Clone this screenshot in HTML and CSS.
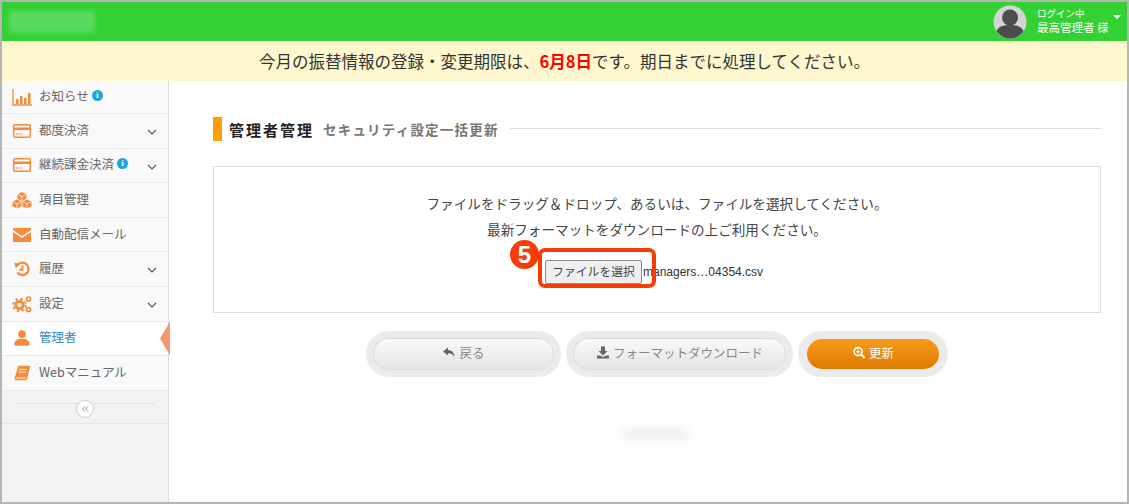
FILE: index.html
```html
<!DOCTYPE html>
<html lang="ja">
<head>
  <meta charset="UTF-8">
  <title>管理者管理</title>
  <link rel="stylesheet" href="styles.css">
</head>
<body>
  <div class="frame">
    <header class="topbar">
      <div class="logo"></div>
      <div class="user">
        <svg class="avatar" viewBox="0 0 34 34">
          <circle cx="17" cy="17" r="16.5" fill="#d4d4d4"/>
          <circle cx="17" cy="12.5" r="8" fill="#4d4d4d"/>
          <path d="M3.5 26c2-4.500 7-6 13.500-6s11.500 1.500 13.500 6c-3 4.500-8 7.500-13.500 7.500S6.500 30.500 3.500 26z" fill="#4d4d4d"/>
        </svg>
        <div class="user-text">
          <div class="user-label">ログイン中</div>
          <div class="user-name">最高管理者 様</div>
        </div>
        <span class="caret"></span>
      </div>
    </header>
    <div class="notice">今月の振替情報の登録・変更期限は、<b>6月8日</b>です。期日までに処理してください。</div>
    <div class="body-row">
      <nav class="sidebar">
        <a class="nav-item first">
          <svg class="nav-icon" viewBox="0 0 20 20"><path d="M1 2v16h19" fill="none" stroke="#f58b3c" stroke-width="1.300"/><path d="M4 12h2.500v5H4zM8 9h2.500v8H8zM12 11h2.500v6H12zM16 6h2.500v11H16z" fill="#f58b3c"/></svg>
          <span>お知らせ</span><i class="info">i</i>
        </a>
        <a class="nav-item">
          <svg class="nav-icon" viewBox="0 0 20 20"><rect x="1.700" y="3.700" width="16.600" height="12.600" rx="1.500" fill="none" stroke="#f58b3c" stroke-width="1.500"/><path d="M2 6.500h16v2.500H2z" fill="#f58b3c"/><path d="M4 13h3M8 13h2" stroke="#f58b3c"/></svg>
          <span>都度決済</span>
          <svg class="chev" viewBox="0 0 10 6"><path d="M1 1l4 4 4-4" fill="none" stroke="#555" stroke-width="1.100"/></svg>
        </a>
        <a class="nav-item">
          <svg class="nav-icon" viewBox="0 0 20 20"><rect x="1.700" y="3.700" width="16.600" height="12.600" rx="1.500" fill="none" stroke="#f58b3c" stroke-width="1.500"/><path d="M2 6.500h16v2.500H2z" fill="#f58b3c"/><path d="M4 13h3M8 13h2" stroke="#f58b3c"/></svg>
          <span>継続課金決済</span><i class="info">i</i>
          <svg class="chev" viewBox="0 0 10 6"><path d="M1 1l4 4 4-4" fill="none" stroke="#555" stroke-width="1.100"/></svg>
        </a>
        <a class="nav-item">
          <svg class="nav-icon" viewBox="0 0 20 20"><path d="M10 2l4.500 2.200v4.600L10 11 5.500 8.800V4.200zM5 9.500l4.500 2.200v4.600L5 18.500.5 16.300v-4.600zM15 9.500l4.500 2.200v4.600L15 18.500l-4.500-2.200v-4.600z" fill="#f58b3c"/><path d="M5.500 4.200L10 6.500l4.500-2.300M10 6.500V11M.5 11.700L5 14l4.500-2.300M5 14v4.500M10.500 11.700L15 14l4.500-2.300M15 14v4.500" fill="none" stroke="#fff" stroke-width=".7"/></svg>
          <span>項目管理</span>
        </a>
        <a class="nav-item">
          <svg class="nav-icon" viewBox="0 0 20 20"><path d="M2 3h16c.6 0 1 .4 1 1v1l-9 6-9-6V4c0-.6.400-1 1-1z" fill="#f58b3c"/><path d="M1 7l9 6 9-6v9c0 .6-.4 1-1 1H2c-.6 0-1-.4-1-1z" fill="#f58b3c"/></svg>
          <span>自動配信メール</span>
        </a>
        <a class="nav-item">
          <svg class="nav-icon" viewBox="-3 -3 26 26"><path d="M3.500 6A8 8 0 1 1 4 14.500" fill="none" stroke="#f58b3c" stroke-width="3"/><path d="M0 2l7 1-5 6z" fill="#f58b3c"/><path d="M10.500 5.500V11H6.500" fill="none" stroke="#f58b3c" stroke-width="2.800"/></svg>
          <span>履歴</span>
          <svg class="chev" viewBox="0 0 10 6"><path d="M1 1l4 4 4-4" fill="none" stroke="#555" stroke-width="1.100"/></svg>
        </a>
        <a class="nav-item">
          <svg class="nav-icon" viewBox="0 0 20 20"><circle cx="7.500" cy="11" r="3.800" fill="none" stroke="#f58b3c" stroke-width="3"/><circle cx="7.500" cy="11" r="6.300" fill="none" stroke="#f58b3c" stroke-width="1.800" stroke-dasharray="2.400 2.550"/><circle cx="16.500" cy="5" r="2" fill="none" stroke="#f58b3c" stroke-width="1.700"/><circle cx="16.500" cy="15.500" r="2" fill="none" stroke="#f58b3c" stroke-width="1.700"/></svg>
          <span>設定</span>
          <svg class="chev" viewBox="0 0 10 6"><path d="M1 1l4 4 4-4" fill="none" stroke="#555" stroke-width="1.100"/></svg>
        </a>
        <a class="nav-item active">
          <svg class="nav-icon" viewBox="-3 -3 26 26"><circle cx="10" cy="5" r="5" fill="#f58b3c"/><path d="M1.500 20c-1 0-1.500-.5-1.500-1.500C0 13.500 4 11 10 11s10 2.500 10 7.500c0 1-.5 1.500-1.500 1.500z" fill="#f58b3c"/></svg>
          <span>管理者</span>
          <span class="active-mark"></span>
        </a>
        <a class="nav-item">
          <svg class="nav-icon" viewBox="-1 -1 22 22"><path d="M6 2h12c1 0 1 1 .8 1.600L15.500 17c-.2.700-.7 1-1.500 1H3.500C2 18 1.500 16.500 2 15z" fill="#f58b3c"/><path d="M3.500 15.500h11M7 6h8M6.300 9h8" stroke="#fff" stroke-width="1"/></svg>
          <span>Webマニュアル</span>
        </a>
        <div class="collapse">
          <span class="collapse-btn">
            <svg viewBox="0 0 10 8"><path d="M4.500 1L1.500 4l3 3M8 1L5 4l3 3" fill="none" stroke="#999" stroke-width="1.100"/></svg>
          </span>
        </div>
      </nav>
      <main class="content">
        <h1 class="page-title">
          <span class="title-main">管理者管理</span>
          <span class="title-sub">セキュリティ設定一括更新</span>
        </h1>
        <section class="upload-box">
          <p>ファイルをドラッグ＆ドロップ、あるいは、ファイルを選択してください。</p>
          <p>最新フォーマットをダウンロードの上ご利用ください。</p>
          <div class="file-row">
            <span class="step">5</span>
            <span class="file-wrap">
              <button class="file-btn">ファイルを選択</button>
            </span>
            <span class="file-name">managers…04354.csv</span>
          </div>
        </section>
        <div class="actions">
          <div class="well back"><button class="btn">
            <svg class="btn-icon" viewBox="0 0 14 12"><path d="M6 1L1 5l5 4V6.700c3 0 5 .8 6.500 3.800 0-4-2.500-7-6.500-7z" fill="#666"/></svg>戻る</button></div>
          <div class="well format"><button class="btn">
            <svg class="btn-icon" viewBox="0 0 14 12"><path d="M5 0h4v4.500h2.500L7 9 2.500 4.500H5zM1 9h3l3 1.500L10 9h3v3H1z" fill="#666"/></svg>フォーマットダウンロード</button></div>
          <div class="well update"><button class="btn primary">
            <svg class="btn-icon" viewBox="0 0 14 14"><circle cx="6" cy="6" r="4.300" fill="none" stroke="#fff" stroke-width="1.800"/><path d="M9.500 9.500l3.500 3.500" stroke="#fff" stroke-width="2.200"/><path d="M4 6h4M6 4v4" stroke="#fff" stroke-width="1.200"/></svg>更新</button></div>
        </div>
        <div class="blur-foot"></div>
      </main>
    </div>
  </div>
</body>
</html>
```

FILE: styles.css
```css
* {
  box-sizing: border-box;
  margin: 0;
  padding: 0;
}
html, body {
  height: 504px;
  overflow: hidden;
}
body {
  font-family: "Noto Sans CJK JP", "Liberation Sans", sans-serif;
  color: #444;
  background: #fff;
}
.frame {
  height: 504px;
  border: 2px solid #b5b5b5;
  display: flex;
  flex-direction: column;
}
.topbar {
  height: 39px;
  background: #33d133;
  display: flex;
  justify-content: space-between;
  align-items: center;
  flex-shrink: 0;
}
.logo {
  width: 86px;
  height: 22px;
  margin-left: 7px;
  background: #5ad85f;
  filter: blur(2px);
}
.user {
  display: flex;
  align-items: center;
  margin-right: 6px;
  color: #fff;
  position: relative;
}
.avatar {
  width: 34px;
  height: 34px;
  margin-right: 10px;
}
.user-text {
  width: 76px;
  padding-bottom: 4px;
}
.user-label {
  font-size: 9.500px;
  line-height: 14px;
}
.user-name {
  font-size: 11.500px;
  line-height: 14px;
}
.caret {
  width: 0;
  height: 0;
  border: 4px solid transparent;
  border-top: 4px solid #fff;
  border-bottom: 0;
  margin: -10px 0 0 0;
}
.notice {
  height: 40px;
  background: #fff8ce;
  font-size: 16.500px;
  line-height: 40px;
  text-align: center;
  color: #333;
  flex-shrink: 0;
}
.notice b {
  color: #f00;
}
.body-row {
  flex: 1;
  display: flex;
  min-height: 0;
}
.sidebar {
  width: 167px;
  background: #f2f2f2;
  border-right: 1px solid #dcdcdc;
  flex-shrink: 0;
}
.nav-item {
  height: 34.600px;
  display: flex;
  align-items: center;
  background: #f9f9f9;
  border-bottom: 1px solid #ebebeb;
  font-size: 12.500px;
  color: #666;
  padding-left: 10px;
  position: relative;
}
.nav-item span {
  margin-top: -3px;
}
.nav-item.first {
  height: 33px;
}
.nav-icon {
  width: 20px;
  height: 20px;
  margin-right: 7px;
  flex-shrink: 0;
}
.info {
  width: 11px;
  height: 11px;
  border-radius: 50%;
  background: #1aa7e0;
  color: #fff;
  font: bold 9px/11px "Liberation Serif", serif;
  text-align: center;
  margin: -3px 0 0 3px;
}
.chev {
  width: 10px;
  height: 6px;
  position: absolute;
  right: 11px;
  top: 15px;
}
.nav-item.active {
  background: #fff;
  color: #3a87c8;
}
.nav-item .active-mark {
  position: absolute;
  right: -2px;
  top: 0;
  margin: 0;
  width: 10px;
  height: 34px;
  background: #f9966a;
  clip-path: polygon(100% 0, 100% 100%, 0 50%);
}
.collapse {
  height: 33px;
  border-bottom: 1px solid #e6e6e6;
  position: relative;
  display: flex;
  justify-content: center;
  align-items: center;
}
.collapse::before {
  content: "";
  position: absolute;
  left: 13px;
  right: 13px;
  top: 12px;
  border-top: 1px solid #e2e2e2;
}
.collapse-btn {
  width: 18px;
  height: 18px;
  margin-top: 5px;
  border-radius: 50%;
  border: 1px solid #d0d0d0;
  background: #fff;
  display: flex;
  align-items: center;
  justify-content: center;
  position: relative;
}
.collapse-btn svg {
  width: 9px;
  height: 8px;
}
.content {
  flex: 1;
  padding: 36px 26px 0 44px;
  min-width: 0;
}
.page-title {
  height: 24px;
  display: flex;
  align-items: center;
  border-left: 9px solid #ff9d0a;
  padding-left: 7px;
  font-weight: normal;
  margin-bottom: 25px;
}
.title-main {
  font-size: 15px;
  font-weight: bold;
  letter-spacing: 2px;
  color: #222;
}
.title-sub {
  font-size: 13.500px;
  font-weight: bold;
  letter-spacing: 1.200px;
  color: #777;
  margin-left: 9px;
}
.page-title::after {
  content: "";
  flex: 1;
  border-top: 1px solid #ddd;
  margin-left: 11px;
  margin-top: -2px;
}
.upload-box {
  height: 147px;
  border: 1px solid #ddd;
  padding-top: 23px;
  text-align: center;
  font-size: 13.600px;
  color: #444;
}
.upload-box p {
  line-height: 26px;
}
.file-row {
  position: relative;
  display: flex;
  align-items: center;
  width: 224px;
  margin: 17px auto 0 331px;
  height: 26px;
}
.file-wrap {
  display: block;
  padding: 0;
  position: relative;
}
.file-wrap::after {
  content: "";
  position: absolute;
  left: -7px;
  right: -14px;
  top: -12px;
  bottom: -4px;
  border: 4px solid #f53d07;
  border-radius: 7px;
  pointer-events: none;
  z-index: 3;
}
.step {
  position: absolute;
  left: -35px;
  top: -19px;
  width: 29px;
  height: 29px;
  border-radius: 50%;
  background: #f53d07;
  color: #fff;
  font: bold 24px/29px "Liberation Sans", sans-serif;
  text-align: center;
  z-index: 4;
}
.file-btn {
  width: 97px;
  height: 24px;
  padding-bottom: 3px;
  font-family: inherit;
  font-size: 11.800px;
  color: #444;
  background: #efefef;
  border: 1px solid #8f8f8f;
  border-radius: 2px;
  display: block;
}
.file-name {
  font: 12px "Liberation Sans", sans-serif;
  color: #333;
  margin-left: 1px;
  white-space: nowrap;
}
.actions {
  display: flex;
  justify-content: center;
  gap: 5px;
  margin-top: 18px;
}
.well {
  height: 46px;
  padding: 8px;
  border-radius: 24px;
  background: #ebebeb;
}
.well.back {
  width: 195px;
}
.well.format {
  width: 227px;
}
.well.update {
  width: 150px;
  padding: 8px 9px;
}
.btn {
  width: 100%;
  height: 30px;
  padding-bottom: 3px;
  border: 0;
  border-radius: 16px;
  font-family: inherit;
  font-size: 12.500px;
  color: #888;
  background: linear-gradient(#fafafa, #e4e4e4);
  box-shadow: 0 0 0 1px #dcdcdc;
  display: flex;
  align-items: center;
  justify-content: center;
}
.btn.primary {
  color: #fff;
  background: linear-gradient(#f99b18, #dd7a02);
  box-shadow: none;
}
.btn-icon {
  width: 14px;
  height: 13px;
  margin-right: 3px;
}
.blur-foot {
  width: 66px;
  height: 13px;
  margin: 51px auto 0;
  background: #f0f0f0;
  filter: blur(4px);
  position: relative;
  left: -2px;
}
```
